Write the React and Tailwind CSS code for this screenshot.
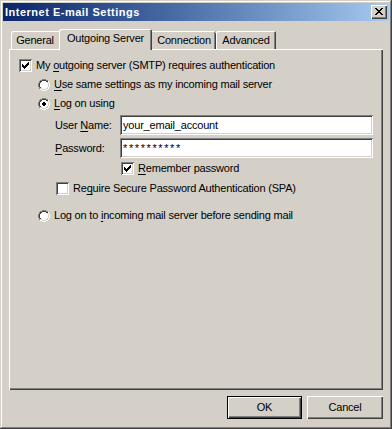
import React from 'react';

const FONT = "[font-family:'Liberation_Sans',Arial,sans-serif]";

const SUNKEN = 'shadow-[inset_1px_1px_0_#808080,inset_-1px_-1px_0_#ffffff,inset_2px_2px_0_#404040,inset_-2px_-2px_0_#d4d0c8]';
const RAISED = 'shadow-[inset_1px_1px_0_#ffffff,inset_-1px_-1px_0_#404040,inset_-2px_-2px_0_#808080]';

const RADIO_MAP = [
    '....GGGG....',
    '..GGDDDDGG..',
    '.GDDWWWWDDH.',
    '.GDWWWWWWLH.',
    'GDWWWWWWWWLH',
    'GDWWWWWWWWLH',
    'GDWWWWWWWWLH',
    'GDWWWWWWWWLH',
    '.GDWWWWWWLH.',
    '.GLLWWWWLLH.',
    '..HHLLLLHH..',
    '....HHHH....',
];

const DOT = ['.XX.', 'XXXX', 'XXXX', '.XX.'];

const COLORS = { G: '#808080', D: '#404040', W: '#ffffff', L: '#d4d0c8', H: '#ffffff', X: '#000000' };

const Radio = ({ checked }) => (
    <svg width="12" height="12" viewBox="0 0 12 12" shapeRendering="crispEdges" className="shrink-0">
        {RADIO_MAP.flatMap((row, y) =>
            row.split('').map((c, x) =>
                c === '.' ? null : <rect key={`${x}-${y}`} x={x} y={y} width="1" height="1" fill={COLORS[c]} />
            )
        )}
        {checked &&
            DOT.flatMap((row, y) =>
                row.split('').map((c, x) =>
                    c === '.' ? null : <rect key={`d${x}-${y}`} x={x + 4} y={y + 4} width="1" height="1" fill="#000" />
                )
            )}
    </svg>
);

const Checkbox = ({ checked }) => (
    <div className={`w-[13px] h-[13px] bg-white shrink-0 relative ${SUNKEN}`}>
        {checked && (
            <svg width="7" height="7" viewBox="0 0 7 7" shapeRendering="crispEdges" className="absolute left-[3px] top-[3px]">
                <path d="M6 0h1v3h-1zM5 1h1v3h-1zM4 2h1v3h-1zM3 3h1v3h-1zM2 4h1v3h-1zM1 3h1v3h-1zM0 2h1v3h-1z" fill="#000" />
            </svg>
        )}
    </div>
);

const U = ({ children }) => <span className="underline underline-offset-[2px]">{children}</span>;

const Tab = ({ label, className }) => (
    <div className={`flex items-center justify-center bg-[#d4d0c8] ${className}`}>{label}</div>
);

const TextBox = ({ value }) => (
    <div className={`w-[253px] h-[20px] bg-white flex items-center px-[3px] ${SUNKEN}`}>{value}</div>
);

export default function App() {
    return (
        <div className={`w-[392px] h-[429px] bg-[#d4d0c8] p-[3px] flex flex-col text-[11px] leading-[13px] tracking-[-0.2px] text-black ${FONT} shadow-[inset_-1px_-1px_0_#404040,inset_1px_1px_0_#d4d0c8,inset_-2px_-2px_0_#808080,inset_2px_2px_0_#ffffff]`}>
            {/* Title bar */}
            <div className="h-[18px] bg-linear-to-r from-[#0a246a] to-[#a6caf0] flex items-center justify-between pl-[2px] pr-[2px]">
                <span className="text-white font-bold text-[11px] tracking-[0.5px]">Internet E-mail Settings</span>
                <div className={`w-[16px] h-[14px] bg-[#d4d0c8] relative ${RAISED}`}>
                    <svg width="8" height="7" viewBox="0 0 8 7" shapeRendering="crispEdges" className="absolute left-[4px] top-[3px]">
                        <path d="M0 0h2v1h-2zM6 0h2v1h-2zM1 1h2v1h-2zM5 1h2v1h-2zM2 2h4v1h-4zM3 3h2v1h-2zM2 4h4v1h-4zM1 5h2v1h-2zM5 5h2v1h-2zM0 6h2v1h-2zM6 6h2v1h-2z" fill="#000" />
                    </svg>
                </div>
            </div>

            <div className="flex-1 flex flex-col px-[6px] pt-[8px]">
                {/* Tabs */}
                <div className="h-[20px] flex items-end pl-[2px]">
                    <Tab label="General" className="w-[48px] h-[18px] rounded-tl-[2px] shadow-[inset_1px_1px_0_#ffffff]" />
                    <Tab
                        label="Outgoing Server"
                        className="w-[93px] h-[21px] -mb-px relative z-10 pb-[2px] rounded-t-[2px] shadow-[inset_1px_1px_0_#ffffff,inset_-1px_0_0_#404040,inset_-2px_0_0_#808080]"
                    />
                    <Tab label="Connection" className="w-[64px] h-[18px] rounded-tr-[2px] shadow-[inset_0_1px_0_#ffffff,inset_-1px_0_0_#404040,inset_-2px_0_0_#808080]" />
                    <Tab label="Advanced" className="w-[60px] h-[18px] rounded-t-[2px] shadow-[inset_1px_1px_0_#ffffff,inset_-1px_0_0_#404040,inset_-2px_0_0_#808080]" />
                </div>

                {/* Tab page */}
                <div className="h-[341px] flex flex-col pt-[10px] pl-[10px] shadow-[inset_1px_1px_0_#ffffff,inset_-1px_-1px_0_#404040,inset_-2px_-2px_0_#808080]">
                    <div className="h-[13px] flex items-center gap-[4px]">
                        <Checkbox checked />
                        <span>My <U>o</U>utgoing server (SMTP) requires authentication</span>
                    </div>
                    <div className="h-[13px] mt-[6px] ml-[19px] flex items-center gap-[4px]">
                        <Radio />
                        <span><U>U</U>se same settings as my incoming mail server</span>
                    </div>
                    <div className="h-[13px] mt-[6px] ml-[19px] flex items-center gap-[4px]">
                        <Radio checked />
                        <span><U>L</U>og on using</span>
                    </div>
                    <div className="h-[20px] mt-[5px] ml-[36px] flex items-center">
                        <span className="w-[65px]">User <U>N</U>ame:</span>
                        <TextBox value="your_email_account" />
                    </div>
                    <div className="h-[20px] mt-[3px] ml-[36px] flex items-center">
                        <span className="w-[65px]"><U>P</U>assword:</span>
                        <TextBox value={<span className="tracking-[1.6px]">**********</span>} />
                    </div>
                    <div className="h-[13px] mt-[4px] ml-[102px] flex items-center gap-[4px]">
                        <Checkbox checked />
                        <span><U>R</U>emember password</span>
                    </div>
                    <div className="h-[13px] mt-[7px] ml-[37px] flex items-center gap-[4px]">
                        <Checkbox />
                        <span>Re<U>q</U>uire Secure Password Authentication (SPA)</span>
                    </div>
                    <div className="h-[13px] mt-[14px] ml-[19px] flex items-center gap-[4px]">
                        <Radio />
                        <span>Log on to <U>i</U>ncoming mail server before sending mail</span>
                    </div>
                </div>

                {/* Buttons */}
                <div className="mt-[6px] h-[23px] flex justify-end gap-[5px]">
                    <button className={`w-[75px] h-[23px] bg-[#d4d0c8] border border-black flex items-center justify-center ${FONT} text-[11px] shadow-[inset_1px_1px_0_#ffffff,inset_-1px_-1px_0_#404040,inset_-2px_-2px_0_#808080]`}>
                        OK
                    </button>
                    <button className={`w-[76px] h-[23px] bg-[#d4d0c8] flex items-center justify-center ${FONT} text-[11px] ${RAISED}`}>
                        Cancel
                    </button>
                </div>
            </div>
        </div>
    );
}
